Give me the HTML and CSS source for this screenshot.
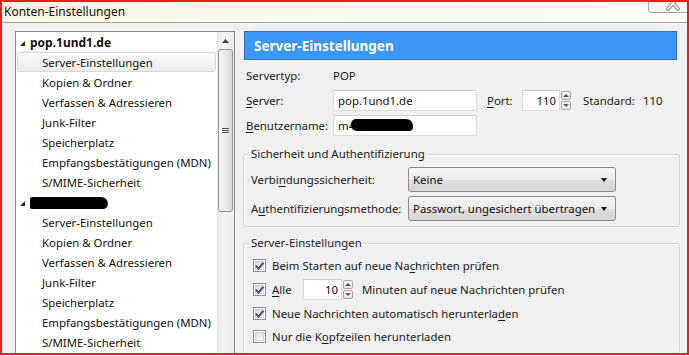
FILE: index.html
```html
<!DOCTYPE html>
<html lang="de">
<head>
  <meta charset="UTF-8">
  <title>Konten-Einstellungen</title>
  <link rel="stylesheet" href="styles.css">
</head>
<body>
  <div class="window">
    <div class="titlebar">
      <span class="title">Konten-Einstellungen</span>
      <span class="close-btn">
        <svg width="38" height="10" viewBox="0 0 38 10" xmlns="http://www.w3.org/2000/svg">
          <path d="M19 -5 L29 7 M29 -5 L19 7" stroke="#8a8a8a" stroke-width="3.6" stroke-linecap="round"/>
          <path d="M19 -5 L29 7 M29 -5 L19 7" stroke="#ffffff" stroke-width="1.6" stroke-linecap="round"/>
        </svg>
      </span>
    </div>

    <div class="content">
      <!-- account tree -->
      <div class="tree">
        <ul class="tree-list">
          <li class="row account"><span class="twisty"></span>pop.1und1.de</li>
          <li class="row item selected">Server-Einstellungen</li>
          <li class="row item">Kopien &amp; Ordner</li>
          <li class="row item">Verfassen &amp; Adressieren</li>
          <li class="row item">Junk-Filter</li>
          <li class="row item">Speicherplatz</li>
          <li class="row item">Empfangsbestätigungen (MDN)</li>
          <li class="row item">S/MIME-Sicherheit</li>
          <li class="row account"><span class="twisty"></span><span class="redacted account-blob"></span></li>
          <li class="row item">Server-Einstellungen</li>
          <li class="row item">Kopien &amp; Ordner</li>
          <li class="row item">Verfassen &amp; Adressieren</li>
          <li class="row item">Junk-Filter</li>
          <li class="row item">Speicherplatz</li>
          <li class="row item">Empfangsbestätigungen (MDN)</li>
          <li class="row item">S/MIME-Sicherheit</li>
        </ul>
        <div class="scrollbar">
          <div class="scroll-btn">
            <svg width="7" height="4" viewBox="0 0 7 4"><polygon points="3.5,0 7,4 0,4" fill="#3d3d3d"/></svg>
          </div>
          <div class="thumb"><span class="grip"></span></div>
        </div>
      </div>

      <!-- settings pane -->
      <div class="pane">
        <div class="pane-header">Server-Einstellungen</div>

        <div class="form">
          <div class="form-row type-row">
            <span class="label">Servertyp:</span>
            <span>POP</span>
          </div>
          <div class="form-row">
            <span class="label"><u>S</u>erver:</span>
            <span class="textbox server-box">pop.1und1.de</span>
            <span class="port-label"><u>P</u>ort:</span>
            <span class="spin">
              <span class="textbox spin-box">110</span>
              <span class="spin-btns"><span class="spin-up"></span><span class="spin-down"></span></span>
            </span>
            <span class="default-label">Standard:</span>
            <span>110</span>
          </div>
          <div class="form-row">
            <span class="label"><u>B</u>enutzername:</span>
            <span class="textbox server-box">m4<span class="redacted user-blob"></span></span>
          </div>
        </div>

        <fieldset class="group security">
          <legend>Sicherheit und Authentifizierung</legend>
          <div class="select-row">
            <span class="select-label">Verbi<u>n</u>dungssicherheit:</span>
            <span class="dropdown">Keine<span class="arrow"></span></span>
          </div>
          <div class="select-row">
            <span class="select-label">A<u>u</u>thentifizierungsmethode:</span>
            <span class="dropdown">Passwort, ungesichert übertragen<span class="arrow"></span></span>
          </div>
        </fieldset>

        <fieldset class="group server">
          <legend>Server-Einstellungen</legend>
          <div class="check-row">
            <span class="checkbox checked"></span>
            <span>Beim Starten auf neue Na<u>c</u>hrichten prüfen</span>
          </div>
          <div class="check-row tall">
            <span class="checkbox checked"></span>
            <span class="alle-label"><u>A</u>lle</span>
            <span class="spin">
              <span class="textbox spin-box small">10</span>
              <span class="spin-btns"><span class="spin-up"></span><span class="spin-down"></span></span>
            </span>
            <span class="minutes">Minuten auf neue Nachrichten prüfen</span>
          </div>
          <div class="check-row">
            <span class="checkbox checked"></span>
            <span>Neue Nachrichten automatisch herunterla<u>d</u>en</span>
          </div>
          <div class="check-row">
            <span class="checkbox"></span>
            <span>Nur die K<u>o</u>pfzeilen herunterladen</span>
          </div>
        </fieldset>
      </div>
    </div>
  </div>
</body>
</html>
```

FILE: styles.css
```css
body {
  margin: 0;
  padding: 0;
  background: #fff;
  font-family: 'Noto Sans', 'Liberation Sans', Arial, sans-serif;
  font-size: 11.4px;
  color: #1a1a1a;
}
.window {
  width: 689px;
  height: 355px;
  box-sizing: border-box;
  border: 2px solid #e0231f;
  display: flex;
  flex-direction: column;
  overflow: hidden;
  background: #f0f0f0;
}
u {
  text-decoration-thickness: 1px;
  text-underline-offset: 2px;
}

/* title bar */
.titlebar {
  height: 20px;
  flex: none;
  display: flex;
  justify-content: space-between;
  align-items: flex-start;
  background: linear-gradient(to right, #f6f5e3, #fbfbf2 60%, #fcfcf6);
  border-bottom: 1px solid #a5a5a5;
}
.title {
  padding: 2px 0 0 2px;
  line-height: 16px;
  font-size: 12px;
  color: #111;
}
.close-btn {
  width: 38px;
  height: 10px;
  border-left: 1px solid #a9a9a9;
  border-bottom: 1px solid #a9a9a9;
  border-bottom-left-radius: 4px;
  background: #f7f7ee;
}
.close-btn svg {
  display: block;
}

/* main area */
.content {
  flex: 1;
  display: flex;
  gap: 8px;
  padding: 8px 0 0 13px;
  min-height: 0;
}

/* tree */
.tree {
  width: 220px;
  box-sizing: border-box;
  border: 1px solid #828790;
  border-bottom: none;
  background: #fff;
  display: flex;
  flex: none;
}
.tree-list {
  list-style: none;
  margin: 0;
  padding: 0 1px;
  flex: 1;
}
.row {
  height: 20px;
  box-sizing: border-box;
  display: flex;
  align-items: center;
  white-space: nowrap;
  color: #111;
}
.account {
  padding-left: 3px;
  font-weight: 700;
  font-size: 12px;
}
.item {
  padding-left: 25px;
}
.item.selected {
  border: 1px solid #d9d9d9;
  border-radius: 3px;
  padding-left: 24px;
  background: linear-gradient(#fafafa, #ececec);
}
.twisty {
  width: 0;
  height: 0;
  border-left: 5px solid transparent;
  border-bottom: 5px solid #2a2a2a;
  margin: 3px 5px 0 0;
}
.redacted {
  display: inline-block;
  background: #000;
}
.account-blob {
  width: 78px;
  height: 12px;
  border-radius: 3px 8px 6px 2px;
  margin-top: 2px;
}

/* scrollbar */
.scrollbar {
  width: 17px;
  flex: none;
  background: linear-gradient(to right, #e6e6e6, #f3f3f3 40%, #ececec);
  display: flex;
  flex-direction: column;
  align-items: center;
}
.scroll-btn {
  height: 17px;
  width: 17px;
  display: flex;
  align-items: center;
  justify-content: center;
}
.thumb {
  width: 15px;
  height: 163px;
  box-sizing: border-box;
  border: 1px solid #979797;
  border-radius: 3px;
  background: linear-gradient(to right, #f4f4f4, #e8e8e8 50%, #d9d9d9);
  display: flex;
  align-items: center;
  justify-content: center;
}
.grip {
  width: 7px;
  height: 5px;
  background: repeating-linear-gradient(#555 0 1px, transparent 1px 2px);
}

/* right pane */
.pane {
  width: 437px;
  display: flex;
  flex-direction: column;
}
.pane > * {
  flex-shrink: 0;
}
.pane-header {
  height: 27px;
  margin-left: 1px;
  margin-right: 3px;
  border: 1px solid #2e6fc0;
  background: #3a97f6;
  color: #fff;
  font-weight: 700;
  font-size: 13.5px;
  display: flex;
  align-items: center;
  padding-left: 9px;
}
.form {
  display: flex;
  flex-direction: column;
  gap: 3px;
  padding: 5px 0 0 3px;
}
.form-row {
  display: flex;
  align-items: center;
  height: 22px;
  white-space: nowrap;
}
.form-row > * {
  flex: none;
}
.type-row {
  height: 20px;
  margin-bottom: 1px;
}
.label {
  width: 87px;
}
.textbox {
  height: 21px;
  box-sizing: border-box;
  border: 1px solid #dcdcdc;
  border-top-color: #cfcfcf;
  background: #fff;
  display: flex;
  align-items: center;
  padding-left: 4px;
  color: #111;
}
.server-box {
  width: 144px;
}
.user-blob {
  width: 62px;
  height: 12px;
  border-radius: 5px 7px 4px 6px;
  margin-left: -4px;
}
.port-label {
  width: 35px;
  margin-left: 10px;
}
.spin {
  display: flex;
  align-items: center;
}
.spin-box {
  width: 38px;
  justify-content: flex-end;
  padding: 0 3px 0 0;
}
.spin-box.small {
  width: 39px;
}
.spin-btns {
  display: flex;
  flex-direction: column;
  gap: 1px;
  margin-left: 1px;
}
.spin-up, .spin-down {
  width: 10px;
  height: 9px;
  box-sizing: border-box;
  border: 1px solid #a8a8a8;
  border-radius: 2px;
  background: linear-gradient(#fbfbfb, #e4e4e4);
  position: relative;
}
.spin-up::after, .spin-down::after {
  content: '';
  position: absolute;
  left: 1px;
  width: 0;
  height: 0;
  border-left: 3px solid transparent;
  border-right: 3px solid transparent;
}
.spin-up::after {
  top: 2px;
  border-bottom: 3px solid #4a5a75;
}
.spin-down::after {
  top: 2px;
  border-top: 3px solid #4a5a75;
}
.default-label {
  width: 60px;
  margin-left: 12px;
}

/* group boxes */
.group {
  margin: 0;
  padding: 0 7px 5px;
  border: 1px solid #d6d6d6;
  border-radius: 3px;
  box-shadow: inset 1px 1px 0 #fff;
}
.group legend {
  padding: 0 1px;
  margin-left: -1px;
  line-height: 16px;
  color: #1a1a1a;
}
.security {
  margin-top: 10px;
}
.server {
  margin-top: 8px;
  flex: 1;
  border-bottom: none;
}
.select-row {
  display: flex;
  align-items: center;
  margin-top: 5px;
  white-space: nowrap;
}
.select-row + .select-row {
  margin-top: 4px;
}
.select-label {
  width: 157px;
  flex: none;
}
.dropdown {
  width: 208px;
  height: 25px;
  flex: none;
  box-sizing: border-box;
  border: 1px solid #8c8c8c;
  border-radius: 3px;
  background: linear-gradient(#f3f3f3, #ececec 50%, #dfdfdf 50%, #d6d6d6);
  display: flex;
  align-items: center;
  justify-content: space-between;
  padding: 0 8px 0 4px;
  color: #111;
}
.arrow {
  width: 0;
  height: 0;
  border-left: 3.5px solid transparent;
  border-right: 3.5px solid transparent;
  border-top: 4px solid #111;
}

/* checkbox rows */
.check-row {
  display: flex;
  align-items: center;
  height: 20px;
  margin-top: 3px;
  padding-left: 2px;
  white-space: nowrap;
}
.check-row:first-of-type {
  margin-top: 4px;
}
.check-row.tall {
  height: 22px;
}
.checkbox {
  width: 13px;
  height: 13px;
  box-sizing: border-box;
  border: 1px solid #8e8f8f;
  background: #fff;
  margin-right: 6px;
  flex: none;
  position: relative;
}
.checkbox::before {
  content: '';
  position: absolute;
  inset: 1px;
  background: linear-gradient(135deg, #dcdcdc, #f6f6f6);
  border: 1px solid #cfcfcf;
  box-sizing: border-box;
}
.checkbox.checked::after {
  content: '';
  position: absolute;
  left: 3px;
  top: 1px;
  width: 3px;
  height: 6px;
  border-right: 2px solid #3b5488;
  border-bottom: 2px solid #3b5488;
  transform: rotate(40deg);
}
.alle-label {
  width: 31px;
}
.minutes {
  margin-left: 9px;
}
```
